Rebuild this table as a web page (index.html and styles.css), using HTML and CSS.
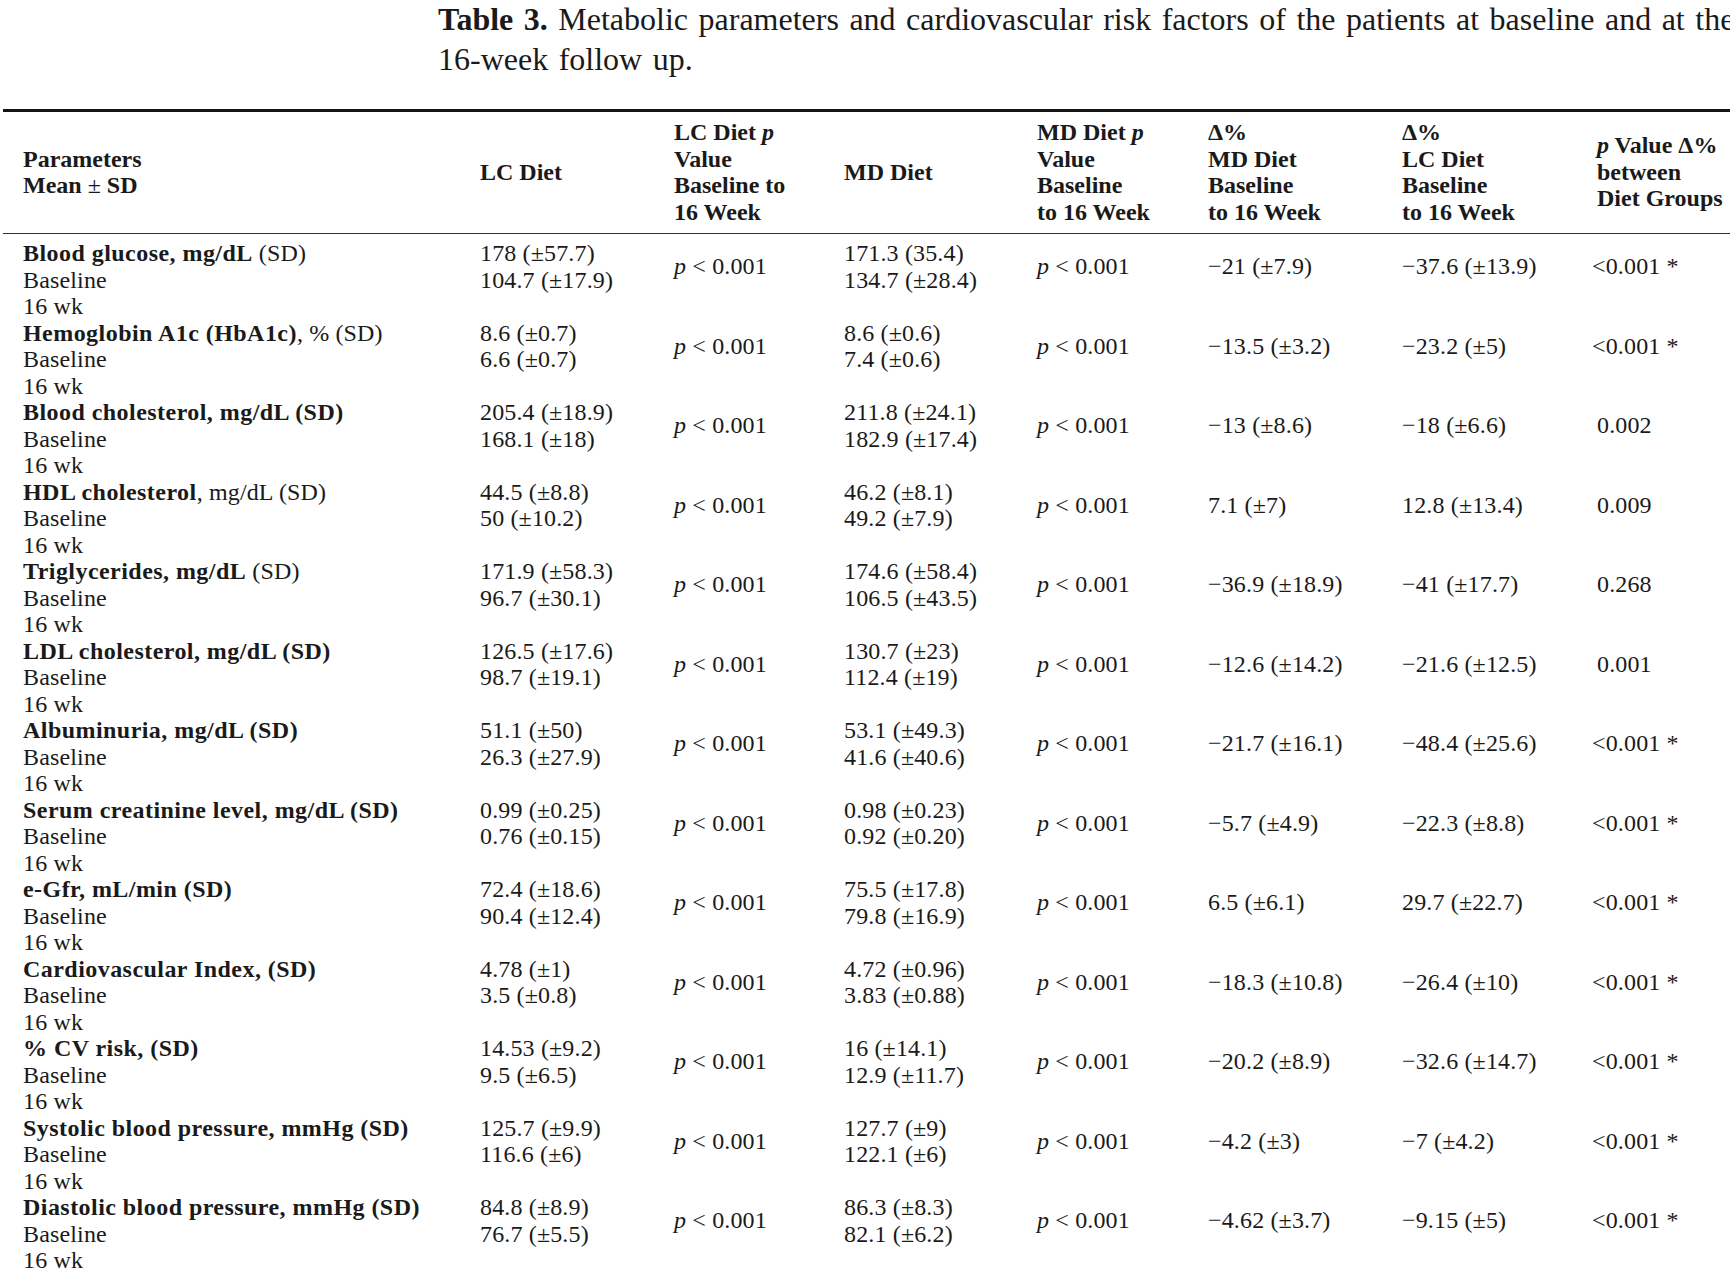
FILE: index.html
```html
<!DOCTYPE html>
<html lang="en">
<head>
<meta charset="utf-8">
<title>Table 3</title>
<link rel="stylesheet" href="styles.css">
</head>
<body>
<div class="page">
  <p class="caption"><b>Table 3.</b> Metabolic parameters and cardiovascular risk factors of the patients at baseline and at the<br>16-week follow up.</p>
  <div class="table">
    <div class="thead row">
      <div class="cell">Parameters<br>Mean <span class="reg">±</span> SD</div>
      <div class="cell">LC Diet</div>
      <div class="cell">LC Diet <i>p</i><br>Value<br>Baseline to<br>16 Week</div>
      <div class="cell">MD Diet</div>
      <div class="cell">MD Diet <i>p</i><br>Value<br>Baseline<br>to 16 Week</div>
      <div class="cell">Δ%<br>MD Diet<br>Baseline<br>to 16 Week</div>
      <div class="cell">Δ%<br>LC Diet<br>Baseline<br>to 16 Week</div>
      <div class="cell"><i>p</i> Value Δ%<br>between<br>Diet Groups</div>
    </div>
    <div class="tbody">
      <div class="row group">
        <div class="cell"><b>Blood glucose, mg/dL</b> (SD)<br>Baseline<br>16 wk</div>
        <div class="cell">178 (±57.7)<br>104.7 (±17.9)</div>
        <div class="cell mid"><i>p</i> &lt; 0.001</div>
        <div class="cell">171.3 (35.4)<br>134.7 (±28.4)</div>
        <div class="cell mid"><i>p</i> &lt; 0.001</div>
        <div class="cell mid">−21 (±7.9)</div>
        <div class="cell mid">−37.6 (±13.9)</div>
        <div class="cell mid lt">&lt;0.001 *</div>
      </div>
      <div class="row group">
        <div class="cell"><b>Hemoglobin A1c (HbA1c)</b>, % (SD)<br>Baseline<br>16 wk</div>
        <div class="cell">8.6 (±0.7)<br>6.6 (±0.7)</div>
        <div class="cell mid"><i>p</i> &lt; 0.001</div>
        <div class="cell">8.6 (±0.6)<br>7.4 (±0.6)</div>
        <div class="cell mid"><i>p</i> &lt; 0.001</div>
        <div class="cell mid">−13.5 (±3.2)</div>
        <div class="cell mid">−23.2 (±5)</div>
        <div class="cell mid lt">&lt;0.001 *</div>
      </div>
      <div class="row group">
        <div class="cell"><b>Blood cholesterol, mg/dL (SD)</b><br>Baseline<br>16 wk</div>
        <div class="cell">205.4 (±18.9)<br>168.1 (±18)</div>
        <div class="cell mid"><i>p</i> &lt; 0.001</div>
        <div class="cell">211.8 (±24.1)<br>182.9 (±17.4)</div>
        <div class="cell mid"><i>p</i> &lt; 0.001</div>
        <div class="cell mid">−13 (±8.6)</div>
        <div class="cell mid">−18 (±6.6)</div>
        <div class="cell mid">0.002</div>
      </div>
      <div class="row group">
        <div class="cell"><b>HDL cholesterol</b>, mg/dL (SD)<br>Baseline<br>16 wk</div>
        <div class="cell">44.5 (±8.8)<br>50 (±10.2)</div>
        <div class="cell mid"><i>p</i> &lt; 0.001</div>
        <div class="cell">46.2 (±8.1)<br>49.2 (±7.9)</div>
        <div class="cell mid"><i>p</i> &lt; 0.001</div>
        <div class="cell mid">7.1 (±7)</div>
        <div class="cell mid">12.8 (±13.4)</div>
        <div class="cell mid">0.009</div>
      </div>
      <div class="row group">
        <div class="cell"><b>Triglycerides, mg/dL</b> (SD)<br>Baseline<br>16 wk</div>
        <div class="cell">171.9 (±58.3)<br>96.7 (±30.1)</div>
        <div class="cell mid"><i>p</i> &lt; 0.001</div>
        <div class="cell">174.6 (±58.4)<br>106.5 (±43.5)</div>
        <div class="cell mid"><i>p</i> &lt; 0.001</div>
        <div class="cell mid">−36.9 (±18.9)</div>
        <div class="cell mid">−41 (±17.7)</div>
        <div class="cell mid">0.268</div>
      </div>
      <div class="row group">
        <div class="cell"><b>LDL cholesterol, mg/dL (SD)</b><br>Baseline<br>16 wk</div>
        <div class="cell">126.5 (±17.6)<br>98.7 (±19.1)</div>
        <div class="cell mid"><i>p</i> &lt; 0.001</div>
        <div class="cell">130.7 (±23)<br>112.4 (±19)</div>
        <div class="cell mid"><i>p</i> &lt; 0.001</div>
        <div class="cell mid">−12.6 (±14.2)</div>
        <div class="cell mid">−21.6 (±12.5)</div>
        <div class="cell mid">0.001</div>
      </div>
      <div class="row group">
        <div class="cell"><b>Albuminuria, mg/dL (SD)</b><br>Baseline<br>16 wk</div>
        <div class="cell">51.1 (±50)<br>26.3 (±27.9)</div>
        <div class="cell mid"><i>p</i> &lt; 0.001</div>
        <div class="cell">53.1 (±49.3)<br>41.6 (±40.6)</div>
        <div class="cell mid"><i>p</i> &lt; 0.001</div>
        <div class="cell mid">−21.7 (±16.1)</div>
        <div class="cell mid">−48.4 (±25.6)</div>
        <div class="cell mid lt">&lt;0.001 *</div>
      </div>
      <div class="row group">
        <div class="cell"><b>Serum creatinine level, mg/dL (SD)</b><br>Baseline<br>16 wk</div>
        <div class="cell">0.99 (±0.25)<br>0.76 (±0.15)</div>
        <div class="cell mid"><i>p</i> &lt; 0.001</div>
        <div class="cell">0.98 (±0.23)<br>0.92 (±0.20)</div>
        <div class="cell mid"><i>p</i> &lt; 0.001</div>
        <div class="cell mid">−5.7 (±4.9)</div>
        <div class="cell mid">−22.3 (±8.8)</div>
        <div class="cell mid lt">&lt;0.001 *</div>
      </div>
      <div class="row group">
        <div class="cell"><b>e-Gfr, mL/min (SD)</b><br>Baseline<br>16 wk</div>
        <div class="cell">72.4 (±18.6)<br>90.4 (±12.4)</div>
        <div class="cell mid"><i>p</i> &lt; 0.001</div>
        <div class="cell">75.5 (±17.8)<br>79.8 (±16.9)</div>
        <div class="cell mid"><i>p</i> &lt; 0.001</div>
        <div class="cell mid">6.5 (±6.1)</div>
        <div class="cell mid">29.7 (±22.7)</div>
        <div class="cell mid lt">&lt;0.001 *</div>
      </div>
      <div class="row group">
        <div class="cell"><b>Cardiovascular Index, (SD)</b><br>Baseline<br>16 wk</div>
        <div class="cell">4.78 (±1)<br>3.5 (±0.8)</div>
        <div class="cell mid"><i>p</i> &lt; 0.001</div>
        <div class="cell">4.72 (±0.96)<br>3.83 (±0.88)</div>
        <div class="cell mid"><i>p</i> &lt; 0.001</div>
        <div class="cell mid">−18.3 (±10.8)</div>
        <div class="cell mid">−26.4 (±10)</div>
        <div class="cell mid lt">&lt;0.001 *</div>
      </div>
      <div class="row group">
        <div class="cell"><b>% CV risk, (SD)</b><br>Baseline<br>16 wk</div>
        <div class="cell">14.53 (±9.2)<br>9.5 (±6.5)</div>
        <div class="cell mid"><i>p</i> &lt; 0.001</div>
        <div class="cell">16 (±14.1)<br>12.9 (±11.7)</div>
        <div class="cell mid"><i>p</i> &lt; 0.001</div>
        <div class="cell mid">−20.2 (±8.9)</div>
        <div class="cell mid">−32.6 (±14.7)</div>
        <div class="cell mid lt">&lt;0.001 *</div>
      </div>
      <div class="row group">
        <div class="cell"><b>Systolic blood pressure, mmHg (SD)</b><br>Baseline<br>16 wk</div>
        <div class="cell">125.7 (±9.9)<br>116.6 (±6)</div>
        <div class="cell mid"><i>p</i> &lt; 0.001</div>
        <div class="cell">127.7 (±9)<br>122.1 (±6)</div>
        <div class="cell mid"><i>p</i> &lt; 0.001</div>
        <div class="cell mid">−4.2 (±3)</div>
        <div class="cell mid">−7 (±4.2)</div>
        <div class="cell mid lt">&lt;0.001 *</div>
      </div>
      <div class="row group">
        <div class="cell"><b>Diastolic blood pressure, mmHg (SD)</b><br>Baseline<br>16 wk</div>
        <div class="cell">84.8 (±8.9)<br>76.7 (±5.5)</div>
        <div class="cell mid"><i>p</i> &lt; 0.001</div>
        <div class="cell">86.3 (±8.3)<br>82.1 (±6.2)</div>
        <div class="cell mid"><i>p</i> &lt; 0.001</div>
        <div class="cell mid">−4.62 (±3.7)</div>
        <div class="cell mid">−9.15 (±5)</div>
        <div class="cell mid lt">&lt;0.001 *</div>
      </div>
    </div>
  </div>
</div>
</body>
</html>
```

FILE: styles.css
```css
html, body {
  margin: 0;
  padding: 0;
  background: #ffffff;
  overflow: hidden;
}

body {
  width: 1730px;
  height: 1280px;
  color: #1a1a1a;
  font-family: "Liberation Serif", "Times New Roman", serif;
}

.page {
  width: 1730px;
}

.caption {
  margin: 0 0 0 438px;
  padding: 0;
  font-size: 32px;
  line-height: 39.5px;
  word-spacing: 2.5px;
  white-space: nowrap;
}

.caption b {
  font-weight: bold;
}

.table {
  margin: 30px 0 0 3px;
  width: 1800px;
  border-top: 3px solid #141414;
  font-size: 24px;
  line-height: 26.5px;
}

.row {
  display: grid;
  grid-template-columns: 457px 194px 170px 193px 171px 194px 195px 226px;
}

.cell {
  padding-left: 20px;
  white-space: nowrap;
}

.thead {
  padding: 7px 0 8px;
  border-bottom: 1px solid #333333;
  font-weight: bold;
  align-items: center;
}

.thead .reg {
  font-weight: normal;
}

.thead i {
  font-weight: bold;
}

.tbody {
  padding-top: 6px;
  letter-spacing: 0.15px;
}

.tbody b {
  letter-spacing: 0.45px;
}

.group {
  align-items: start;
}

.mid {
  margin-top: 13.25px;
}

.lt {
  margin-left: -5px;
}
```
